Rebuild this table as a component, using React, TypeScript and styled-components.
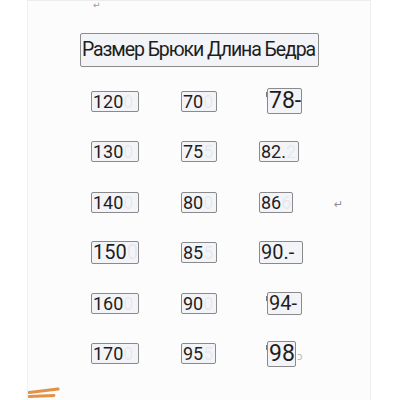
import React from "react";
import styled, { createGlobalStyle } from "styled-components";

const Global = createGlobalStyle`
  html, body { margin: 0; padding: 0; background: #ffffff; }
  body { font-family: Roboto, "Noto Sans", "Liberation Sans", sans-serif; }
`;

const Page = styled.div`
  width: 400px;
  height: 400px;
  display: flex;
  overflow: hidden;
`;

const Panel = styled.div`
  position: relative;
  margin-left: 27px;
  width: 344px;
  height: 400px;
  box-sizing: border-box;
  background: #fcfcfc;
  border-left: 1px solid #f0f0f0;
  border-right: 1px solid #f0f0f0;
  border-top: 1px solid #ededed;
  display: flex;
  flex-direction: column;
  align-items: stretch;
  padding-top: 32px;
`;

const TopMark = styled.span`
  position: absolute;
  left: 65px;
  top: 0;
  font-size: 9px;
  line-height: 9px;
  color: #9a9a9a;
  font-family: "DejaVu Sans", sans-serif;
`;

const Title = styled.div`
  align-self: center;
  height: 34px;
  box-sizing: border-box;
  border: 1px solid #8c8c8c;
  border-radius: 2px;
  background: #f3f4f8;
  padding: 0 3px 0 1px;
  font-size: 19.5px;
  letter-spacing: -1.08px;
  line-height: 32px;
  color: #1e1e1e;
  white-space: nowrap;
  margin-left: 1px;
`;

const Grid = styled.div`
  display: grid;
  grid-template-columns: 90px 78px 73px auto;
  grid-auto-rows: 50.5px;
  align-items: center;
  padding-left: 63px;
  margin-top: 9px;
`;

const CellWrap = styled.div<{ $off: number }>`
  position: relative;
  display: flex;
  align-items: center;
  padding-left: ${(p) => p.$off}px;
`;

const Box = styled.div<{ $w: number; $fs: number; $lh: number }>`
  width: ${(p) => p.$w}px;
  box-sizing: border-box;
  border: 1px solid #8a8a8a;
  border-radius: 2px;
  background: #f3f4f8;
  font-size: ${(p) => p.$fs}px;
  line-height: ${(p) => p.$lh}px;
  color: #1e1e1e;
  padding-left: 1px;
  white-space: nowrap;
  overflow: hidden;
`;

const Ghost = styled.span`
  color: rgba(40, 50, 70, 0.07);
`;

const Tick = styled.span<{ $x: number }>`
  position: absolute;
  left: ${(p) => p.$x}px;
  top: 4px;
  width: 1px;
  height: 5px;
  background: #777;
`;

const Trail = styled.span`
  font-size: 10px;
  color: #b8b8b8;
  margin-left: 1px;
  margin-top: 6px;
  font-family: "DejaVu Sans", sans-serif;
`;

const Return = styled.span`
  font-size: 11px;
  color: #8f8f8f;
  padding-left: 2px;
  margin-top: 4px;
  font-family: "DejaVu Sans", sans-serif;
`;

const Footer = styled.div`
  margin-top: 8px;
  height: 12px;
  display: flex;
`;

type Cell = {
  t: string;
  w: number;
  fs: number;
  lh: number;
  ghost?: string;
  off?: number;
  tick?: boolean;
  trail?: boolean;
};

const rows: (Cell | null)[][] = [
  [
    { t: "120", w: 48, fs: 18, lh: 19, ghost: "0" },
    { t: "70", w: 36, fs: 18, lh: 19, ghost: "0" },
    { t: "78-", w: 35, fs: 23, lh: 24, off: 8, tick: true },
    null,
  ],
  [
    { t: "130", w: 48, fs: 18, lh: 19, ghost: "0" },
    { t: "75", w: 36, fs: 18, lh: 19, ghost: "5" },
    { t: "82.", w: 40, fs: 18, lh: 19, ghost: "2" },
    null,
  ],
  [
    { t: "140", w: 48, fs: 18, lh: 19, ghost: "0" },
    { t: "80", w: 36, fs: 18, lh: 19, ghost: "0" },
    { t: "86", w: 34, fs: 18, lh: 19, ghost: "6" },
    null,
  ],
  [
    { t: "150", w: 48, fs: 20, lh: 21, ghost: "0" },
    { t: "85", w: 36, fs: 18, lh: 19, ghost: "5" },
    { t: "90.-", w: 44, fs: 20, lh: 21 },
    null,
  ],
  [
    { t: "160", w: 48, fs: 18, lh: 19, ghost: "0" },
    { t: "90", w: 36, fs: 18, lh: 19, ghost: "0" },
    { t: "94-", w: 35, fs: 20, lh: 21, off: 8, tick: true },
    null,
  ],
  [
    { t: "170", w: 48, fs: 18, lh: 19, ghost: "0" },
    { t: "95", w: 35, fs: 18, lh: 19, ghost: "5" },
    { t: "98", w: 29, fs: 23, lh: 24, off: 8, tick: true, trail: true },
    null,
  ],
];

function CellView({ c }: { c: Cell }) {
  return (
    <CellWrap $off={c.off ?? 0}>
      {c.tick && <Tick $x={(c.off ?? 0) - 1} />}
      <Box $w={c.w} $fs={c.fs} $lh={c.lh}>
        {c.t}
        {c.ghost && <Ghost>{c.ghost}</Ghost>}
      </Box>
      {c.trail && <Trail>ↄ</Trail>}
    </CellWrap>
  );
}

export default function App() {
  return (
    <>
      <Global />
      <Page>
        <Panel>
          <TopMark>↵</TopMark>
          <Title>Размер Брюки Длина Бедра</Title>
          <Grid>
            {rows.map((r, i) =>
              r.map((c, j) =>
                c ? (
                  <CellView key={`${i}-${j}`} c={c} />
                ) : i === 2 ? (
                  <Return key={`${i}-${j}`}>↵</Return>
                ) : (
                  <span key={`${i}-${j}`} />
                )
              )
            )}
          </Grid>
          <Footer>
            <svg width="34" height="12" viewBox="0 0 34 12">
              <path d="M1 5.5 L30 2" stroke="#e0924a" strokeWidth="3.2" strokeLinecap="round" fill="none" />
              <path d="M1 9.5 L26 8.5" stroke="#e0924a" strokeWidth="2.8" strokeLinecap="round" fill="none" />
            </svg>
          </Footer>
        </Panel>
      </Page>
    </>
  );
}
